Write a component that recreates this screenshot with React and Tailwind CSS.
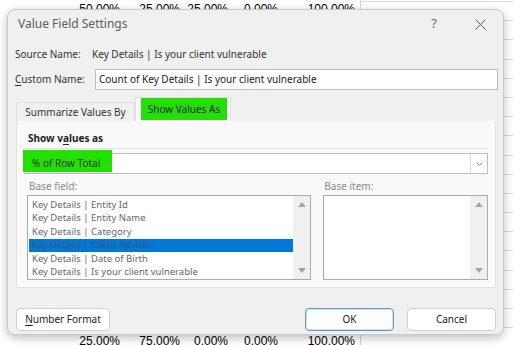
import React from "react";

const sheetFont = { fontFamily: '"Liberation Sans", Arial, sans-serif' };

const baseFields = [
  "Key Details | Entity Id",
  "Key Details | Entity Name",
  "Key Details | Category",
  "Key Details | Client Adviser",
  "Key Details | Date of Birth",
  "Key Details | Is your client vulnerable",
];

function SheetRow({ values, className }) {
  const widths = ["w-[60px]", "w-[60px]", "w-[48px]", "w-[50px]", "w-[77px]"];
  return (
    <div className={`absolute left-[60px] flex text-[12px] leading-[12px] text-black ${className}`} style={sheetFont}>
      {values.map((v, i) => (
        <div key={i} className={`${widths[i]} text-right`}>
          {v}
        </div>
      ))}
    </div>
  );
}

function Arrows() {
  return (
    <div className="flex w-[17px] flex-col items-center justify-between bg-[#f0f0f0] py-[6px]">
      <svg width="8" height="5" viewBox="0 0 8 5">
        <path d="M4 0 L8 5 L0 5 Z" fill="#a3a3a3" />
      </svg>
      <svg width="8" height="5" viewBox="0 0 8 5">
        <path d="M0 0 L8 0 L4 5 Z" fill="#a3a3a3" />
      </svg>
    </div>
  );
}

export default function App() {
  return (
    <div className="relative h-[345px] w-[513px] overflow-hidden bg-white" style={{ fontFamily: '"Noto Sans", "Open Sans", sans-serif' }}>
      {/* ===== spreadsheet behind ===== */}
      <div className="absolute left-[360px] top-0 h-full w-px bg-[#d4d4d4]" />
      <div className="absolute left-[360px] right-0 top-[1px] flex flex-col">
        {Array.from({ length: 18 }).map((_, i) => (
          <div key={i} className="h-[19.2px] border-t border-[#dadada]" />
        ))}
      </div>
      <SheetRow className="top-[3px]" values={["50.00%", "25.00%", "25.00%", "0.00%", "100.00%"]} />
      <SheetRow className="top-[335px]" values={["25.00%", "75.00%", "0.00%", "0.00%", "100.00%"]} />

      {/* ===== dialog ===== */}
      <div className="absolute left-[7px] top-[9px] flex h-[326px] w-[497px] flex-col rounded-[8px] border border-[#c9c9c9] bg-[#f0f0f0] shadow-[0_3px_10px_rgba(0,0,0,0.25)]">
        {/* title bar */}
        <div className="flex h-[28px] items-center pl-[10px] pr-[14px]">
          <span className="text-[12px] text-[#5c5c5c]">Value Field Settings</span>
          <span className="ml-auto mr-[38px] text-[13px] text-[#6a6a6a]">?</span>
          <svg width="11" height="11" viewBox="0 0 11 11" className="mr-[3px]">
            <path d="M0.5 0.5 L10.5 10.5 M10.5 0.5 L0.5 10.5" stroke="#5a5a5a" strokeWidth="1" />
          </svg>
        </div>

        {/* source name */}
        <div className="mt-[7px] flex h-[18px] items-center pl-[7px] text-[10px] text-[#333]">
          <span className="w-[77px]">Source Name:</span>
          <span>Key Details | Is your client vulnerable</span>
        </div>

        {/* custom name */}
        <div className="mt-[6px] flex h-[21px] items-center pl-[7px] text-[10px] text-[#333]">
          <span className="w-[80px]">
            <u className="underline-offset-2">C</u>ustom Name:
          </span>
          <div className="flex h-[21px] w-[403px] items-center border border-[#bdbdbd] bg-white pl-[3px] text-[#222]">
            Count of Key Details | Is your client vulnerable
          </div>
        </div>

        {/* tabs */}
        <div className="mt-[7px] flex h-[24px] items-end pl-[8px] text-[10px] text-[#333]">
          <div className="flex h-[19px] w-[119px] items-center justify-center border border-b-0 border-[#e0e0e0] bg-[#f0f0f0]">
            Summarize Values By
          </div>
          <div className="flex h-[24px] w-[96px] items-start border border-b-0 border-[#e0e0e0] bg-[#f9f9f9] pl-[5px]">
            <div className="flex h-[22px] w-[86px] items-center justify-center bg-[#22e000] text-[#222]">Show Values As</div>
          </div>
        </div>

        {/* panel */}
        <div className="ml-[8px] flex h-[167px] w-[480px] flex-col border border-t-0 border-[#e2e2e2] bg-[#f9f9f9] pr-[7px]">
          <div className="mt-[10px] flex h-[14px] items-center pl-[11px] text-[10px] font-bold text-[#222]">
            Show v<u className="underline-offset-2">a</u>lues as
          </div>
          <div className="ml-[7px] mt-[3px] h-px bg-[#e0e0e0]" />
          <div className="relative ml-[7px] mt-[4px] flex h-[21px] items-center border border-[#bdbdbd] bg-white text-[10px] text-[#333]">
            <div className="absolute left-[-2px] top-[-4px] h-[22px] w-[89px] bg-[#22e000]" />
            <span className="relative pl-[7px]">% of Row Total</span>
            <div className="ml-auto flex h-full w-[17px] items-center justify-center border-l border-[#dcdcdc]">
              <svg width="7" height="4" viewBox="0 0 7 4">
                <path d="M0.5 0.5 L3.5 3.5 L6.5 0.5" fill="none" stroke="#8a8a8a" strokeWidth="1" />
              </svg>
            </div>
          </div>

          <div className="mt-[4px] flex gap-[12px] pl-[10px]">
            {/* base field */}
            <div className="flex w-[285px] flex-col">
              <div className="flex h-[16px] items-center pl-[2px] text-[10px] text-[#8a8a8a]">Base field:</div>
              <div className="mt-[1px] flex h-[85px] border border-[#aaaaaa] bg-white">
                <div className="flex flex-1 flex-col pl-[1px] pt-[2px] text-[9.5px] text-[#666]">
                  {baseFields.map((f, i) => (
                    <div
                      key={f}
                      className={`flex h-[13.5px] items-center pl-[3px] ${i === 3 ? "bg-[#0078d7] text-[#3f5570]" : ""}`}
                    >
                      {f}
                    </div>
                  ))}
                </div>
                <Arrows />
              </div>
            </div>
            {/* base item */}
            <div className="flex w-[165px] flex-col">
              <div className="flex h-[16px] items-center pl-[1px] text-[10px] text-[#8a8a8a]">Base item:</div>
              <div className="mt-[1px] flex h-[85px] border border-[#aaaaaa] bg-white">
                <div className="flex-1" />
                <Arrows />
              </div>
            </div>
          </div>
        </div>

        {/* buttons */}
        <div className="mt-[20px] flex h-[23px] pl-[8px] text-[10px] text-[#222]">
          <div className="flex w-[94px] items-center justify-center rounded-[4px] border border-[#d0d0d0] bg-white">
            <span>
              <u className="underline-offset-2">N</u>umber Format
            </span>
          </div>
          <div className="ml-auto flex w-[89px] items-center justify-center rounded-[4px] border border-[#5b9bd5] bg-white shadow-[inset_0_0_0_1px_#cfe3f5]">
            OK
          </div>
          <div className="ml-[13px] mr-[7px] flex w-[89px] items-center justify-center rounded-[4px] border border-[#d0d0d0] bg-white">
            Cancel
          </div>
        </div>
      </div>
    </div>
  );
}
